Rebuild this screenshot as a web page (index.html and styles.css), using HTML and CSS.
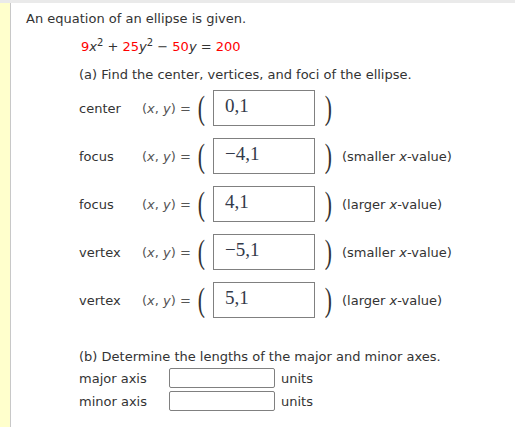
FILE: index.html
```html
<!DOCTYPE html>
<html>
<head>
<meta charset="utf-8">
<link rel="stylesheet" href="styles.css">
</head>
<body>
<div class="page">
  <div class="side"></div>
  <div class="main">
    <p class="intro">An equation of an ellipse is given.</p>
    <p class="eq"><span class="r">9</span><i>x</i><sup>2</sup> + <span class="r">25</span><i>y</i><sup>2</sup> − <span class="r">50</span><i>y</i> = <span class="r">200</span></p>
    <p class="part">(a) Find the center, vertices, and foci of the ellipse.</p>
    <div class="rows">
      <div class="row">
        <span class="lbl">center</span>
        <span class="xy">(<i>x</i>, <i>y</i>) =</span>
        <span class="par">(</span>
        <span class="box">0,1</span>
        <span class="par cl">)</span>
        <span class="note"></span>
      </div>
      <div class="row">
        <span class="lbl">focus</span>
        <span class="xy">(<i>x</i>, <i>y</i>) =</span>
        <span class="par">(</span>
        <span class="box">−4,1</span>
        <span class="par cl">)</span>
        <span class="note">(smaller <i>x</i>-value)</span>
      </div>
      <div class="row">
        <span class="lbl">focus</span>
        <span class="xy">(<i>x</i>, <i>y</i>) =</span>
        <span class="par">(</span>
        <span class="box">4,1</span>
        <span class="par cl">)</span>
        <span class="note">(larger <i>x</i>-value)</span>
      </div>
      <div class="row">
        <span class="lbl">vertex</span>
        <span class="xy">(<i>x</i>, <i>y</i>) =</span>
        <span class="par">(</span>
        <span class="box">−5,1</span>
        <span class="par cl">)</span>
        <span class="note">(smaller <i>x</i>-value)</span>
      </div>
      <div class="row">
        <span class="lbl">vertex</span>
        <span class="xy">(<i>x</i>, <i>y</i>) =</span>
        <span class="par">(</span>
        <span class="box">5,1</span>
        <span class="par cl">)</span>
        <span class="note">(larger <i>x</i>-value)</span>
      </div>
    </div>
    <p class="part partb">(b) Determine the lengths of the major and minor axes.</p>
    <div class="axes">
      <div class="arow"><span class="alb">major axis</span><span class="abox"></span><span class="unit">units</span></div>
      <div class="arow"><span class="alb">minor axis</span><span class="abox"></span><span class="unit">units</span></div>
    </div>
  </div>
</div>
</body>
</html>
```

FILE: styles.css
```css
html, body {
  margin: 0;
  padding: 0;
  background: #fff;
}
body {
  font-family: "DejaVu Sans", Verdana, sans-serif;
  font-size: 13px;
  color: #333;
}
.page {
  display: flex;
  min-height: 427px;
  border-top: 3px solid #eaeaea;
  box-sizing: border-box;
}
.side {
  width: 10px;
  background: #ffffcc;
  border-right: 1px solid #c8c8c8;
  flex: none;
}
.main {
  flex: 1;
  padding-left: 15px;
}
p { margin: 0; }
.intro {
  margin-top: 8px;
  line-height: 16px;
}
.eq {
  margin-top: 12px;
  padding-left: 55px;
  line-height: 16px;
}
.eq sup {
  font-size: 10px;
  vertical-align: 5px;
  line-height: 0;
}
.r { color: #ff0000; }
.part {
  margin-top: 12px;
  padding-left: 53px;
  line-height: 16px;
}
.rows {
  padding-left: 53px;
  margin-top: 7px;
  display: flex;
  flex-direction: column;
  gap: 12px;
}
.row {
  display: flex;
  align-items: center;
  height: 36px;
}
.lbl { width: 63px; }
.xy { width: 55px; color: #555; }
.par {
  display: inline-block;
  font-family: "Liberation Serif", serif;
  font-size: 24px;
  color: #333;
  width: 16px;
  line-height: 24px;
  transform: scale(0.9, 1.4);
  transform-origin: 40% 55%;
}
.par.cl {
  margin-left: 9px;
  width: 18px;
}
.box {
  height: 34px;
  border: 1px solid #808080;
  font-family: "Liberation Serif", serif;
  font-size: 19px;
  color: #333a4a;
  padding-left: 11px;
  box-sizing: content-box;
  width: 89px;
  line-height: 30px;
}
.note { color: #333; }
.partb { margin-top: 31px; }
.axes {
  padding-left: 53px;
  margin-top: 3px;
  display: flex;
  flex-direction: column;
  gap: 3px;
}
.arow {
  display: flex;
  align-items: center;
  height: 20px;
}
.alb { width: 90px; }
.abox {
  width: 104px;
  height: 18px;
  border: 1px solid #808080;
  border-radius: 2px;
  margin-right: 6px;
}
```
